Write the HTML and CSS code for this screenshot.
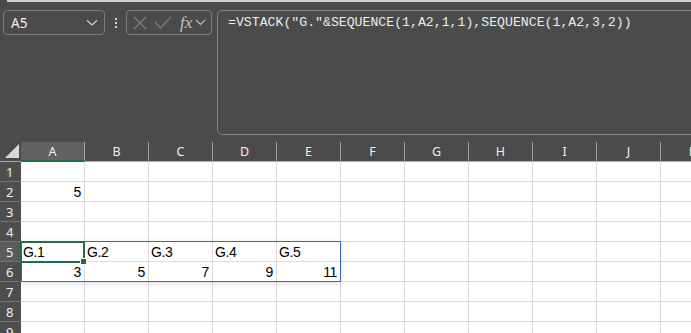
FILE: index.html
```html
<!DOCTYPE html>
<html lang="en">
  <head>
    <meta charset="UTF-8" />
    <title>VSTACK</title>
    <link rel="stylesheet" href="styles.css">
  </head>
  <body>
    <div class="topline"></div>

    <div class="bar">
      <div class="nameBox">
        <span>A5</span>
        <svg width="12" height="8" viewBox="0 0 12 8"><path d="M1 1.5 L6 6 L11 1.5" fill="none" stroke="#cfcfcf" stroke-width="1.3"/></svg>
      </div>
      <div class="dots"><i></i><i></i><i></i></div>
      <div class="fxBox">
        <svg width="16" height="16" viewBox="0 0 16 16"><path d="M2 2 L14 14 M14 2 L2 14" stroke="#7c7c7c" stroke-width="1.2"/></svg>
        <svg width="18" height="14" viewBox="0 0 18 14"><path d="M1 6 L6.5 12 L17 1" fill="none" stroke="#7c7c7c" stroke-width="1.2"/></svg>
        <span class="fx">fx</span>
        <svg width="11" height="7" viewBox="0 0 11 7"><path d="M1 1 L5.5 5.5 L10 1" fill="none" stroke="#bdbdbd" stroke-width="1.2"/></svg>
      </div>
      <div class="formula">=VSTACK("G."&amp;SEQUENCE(1,A2,1,1),SEQUENCE(1,A2,3,2))</div>
    </div>

    <div class="sheet">
      <div class="grid">
        <div class="corner"><svg width="14" height="14" viewBox="0 0 14 14"><path d="M14 0 L14 14 L0 14 Z" fill="#d9d9d9"/></svg></div>
        <div class="colHead active">A</div>
        <div class="colHead">B</div>
        <div class="colHead">C</div>
        <div class="colHead">D</div>
        <div class="colHead">E</div>
        <div class="colHead">F</div>
        <div class="colHead">G</div>
        <div class="colHead">H</div>
        <div class="colHead">I</div>
        <div class="colHead">J</div>
        <div class="colHead">K</div>

        <div class="rowHead">1</div>
        <div class="cell"></div><div class="cell"></div><div class="cell"></div><div class="cell"></div><div class="cell"></div><div class="cell"></div><div class="cell"></div><div class="cell"></div><div class="cell"></div><div class="cell"></div><div class="cell"></div>

        <div class="rowHead">2</div>
        <div class="cell num">5</div><div class="cell"></div><div class="cell"></div><div class="cell"></div><div class="cell"></div><div class="cell"></div><div class="cell"></div><div class="cell"></div><div class="cell"></div><div class="cell"></div><div class="cell"></div>

        <div class="rowHead">3</div>
        <div class="cell"></div><div class="cell"></div><div class="cell"></div><div class="cell"></div><div class="cell"></div><div class="cell"></div><div class="cell"></div><div class="cell"></div><div class="cell"></div><div class="cell"></div><div class="cell"></div>

        <div class="rowHead">4</div>
        <div class="cell"></div><div class="cell"></div><div class="cell"></div><div class="cell"></div><div class="cell"></div><div class="cell"></div><div class="cell"></div><div class="cell"></div><div class="cell"></div><div class="cell"></div><div class="cell"></div>

        <div class="rowHead sel">5</div>
        <div class="cell">G.1</div><div class="cell">G.2</div><div class="cell">G.3</div><div class="cell">G.4</div><div class="cell">G.5</div><div class="cell"></div><div class="cell"></div><div class="cell"></div><div class="cell"></div><div class="cell"></div><div class="cell"></div>

        <div class="rowHead">6</div>
        <div class="cell num">3</div><div class="cell num">5</div><div class="cell num">7</div><div class="cell num">9</div><div class="cell num">11</div><div class="cell"></div><div class="cell"></div><div class="cell"></div><div class="cell"></div><div class="cell"></div><div class="cell"></div>

        <div class="rowHead">7</div>
        <div class="cell"></div><div class="cell"></div><div class="cell"></div><div class="cell"></div><div class="cell"></div><div class="cell"></div><div class="cell"></div><div class="cell"></div><div class="cell"></div><div class="cell"></div><div class="cell"></div>

        <div class="rowHead">8</div>
        <div class="cell"></div><div class="cell"></div><div class="cell"></div><div class="cell"></div><div class="cell"></div><div class="cell"></div><div class="cell"></div><div class="cell"></div><div class="cell"></div><div class="cell"></div><div class="cell"></div>

        <div class="rowHead">9</div>
        <div class="cell"></div><div class="cell"></div><div class="cell"></div><div class="cell"></div><div class="cell"></div><div class="cell"></div><div class="cell"></div><div class="cell"></div><div class="cell"></div><div class="cell"></div><div class="cell"></div>
      </div>

      <!-- spill range A5:E6 and the active cell -->
      <div class="spill"></div>
      <div class="activeCell"><span class="handle"></span></div>
    </div>
  </body>
</html>
```

FILE: styles.css
```css
body {
  margin: 0;
  background: #4b4b4b;
  font-family: "Noto Sans", "Liberation Sans", sans-serif;
  overflow: hidden;
  height: 333px;
}

.topline {
  height: 2px;
  margin-left: 7px;
  background: #cfcfcf;
}

.bar {
  display: flex;
  align-items: flex-start;
  padding: 8px 0 0 3px;
  height: 132px;
  box-sizing: border-box;
  margin-bottom: 8px;
}

.nameBox {
  width: 102px;
  height: 25px;
  box-sizing: border-box;
  border: 1px solid #7d7d7d;
  border-radius: 4px;
  display: flex;
  align-items: center;
  justify-content: space-between;
  padding: 0 6px 0 7px;
  color: #f2f2f2;
  font-size: 13.5px;
}

.nameBox svg {
  margin-top: 1px;
}

.dots {
  width: 21px;
  height: 25px;
  display: flex;
  flex-direction: column;
  align-items: center;
  justify-content: center;
  gap: 2px;
}

.dots i {
  width: 2px;
  height: 2px;
  background: #d6d6d6;
}

.fxBox {
  width: 86px;
  height: 25px;
  box-sizing: border-box;
  border: 1px solid #7d7d7d;
  border-radius: 4px;
  display: flex;
  align-items: center;
  padding: 0 0 0 5px;
  gap: 6px;
}

.fx {
  font-family: "Liberation Serif", serif;
  font-style: italic;
  font-size: 17px;
  color: #c4c4c4;
  margin-left: 2px;
  margin-right: -3px;
}

.formula {
  flex: 1;
  margin-left: 5px;
  margin-right: -12px;
  height: 125px;
  box-sizing: border-box;
  border: 1px solid #868686;
  border-radius: 5px;
  padding: 3px 0 0 10px;
  font-family: "Liberation Mono", monospace;
  font-size: 13.2px;
  line-height: 18px;
  color: #ececec;
}

.sheet {
  position: relative;
}

.grid {
  display: grid;
  grid-template-columns: 21px repeat(11, 64px);
  grid-auto-rows: 20px;
}

.corner {
  display: flex;
  align-items: flex-end;
  justify-content: flex-end;
  padding: 0 2px 3px 0;
  border-bottom: 1px solid #a9a9a9;
  box-sizing: border-box;
}

.colHead {
  box-sizing: border-box;
  border-right: 1px solid #9c9c9c;
  border-bottom: 1px solid #a9a9a9;
  color: #f0f0f0;
  font-size: 12.5px;
  text-align: center;
  line-height: 20px;
}

.colHead.active {
  background: #626262;
  border-bottom: 2px solid #1e7145;
  border-right-color: #a9a9a9;
}

.rowHead {
  box-sizing: border-box;
  border-bottom: 1px solid #737373;
  background: #4e4e4e;
  color: #f0f0f0;
  font-size: 13px;
  line-height: 20px;
  padding-left: 6px;
}

.rowHead.sel {
  background: #5c5c5c;
}

.cell {
  box-sizing: border-box;
  background: #fff;
  border-right: 1px solid #dadada;
  border-bottom: 1px solid #dadada;
  font-family: "Liberation Sans Narrow", "Liberation Sans", sans-serif;
  font-size: 14px;
  letter-spacing: -0.4px;
  color: #000;
  line-height: 21px;
  padding: 0 2px;
  white-space: nowrap;
}

.num {
  text-align: right;
  padding-right: 3px;
}

.spill {
  position: absolute;
  left: 21px;
  top: 99px;
  width: 320px;
  height: 41px;
  box-sizing: border-box;
  border: 1px solid #3566c4;
  box-shadow: 0 2px 6px rgba(0, 0, 0, 0.12);
}

.activeCell {
  position: absolute;
  left: 20px;
  top: 99px;
  width: 65px;
  height: 22px;
  box-sizing: border-box;
  border: 2px solid #1e7145;
}

.handle {
  position: absolute;
  right: -4px;
  bottom: -4px;
  width: 5px;
  height: 5px;
  background: #1e7145;
  border: 1px solid #fff;
}
```
